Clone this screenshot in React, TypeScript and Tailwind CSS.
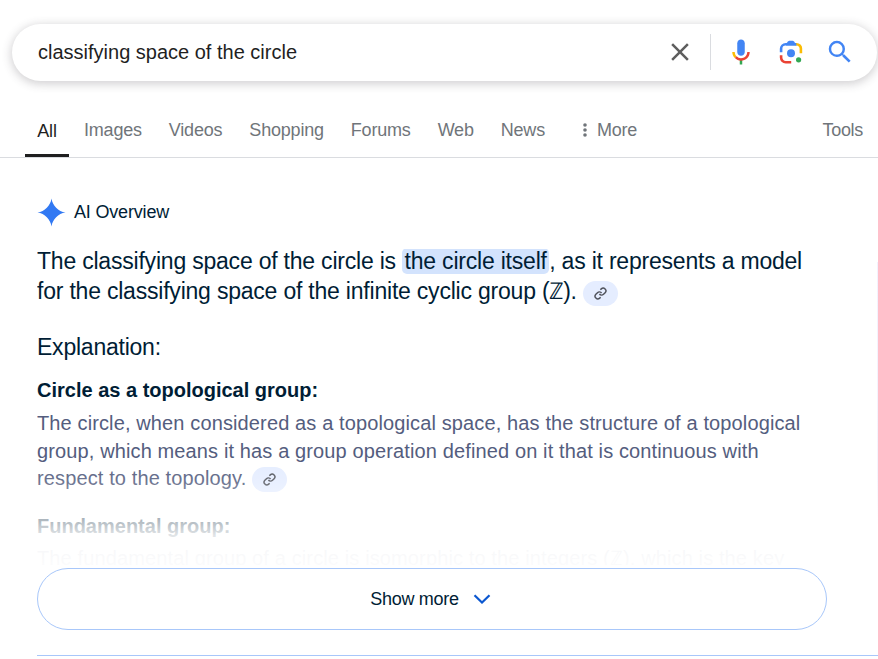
import type { ReactNode } from "react";

function LinkChip() {
  return (
    <span className="-my-3 ml-[6px] inline-flex h-[25px] w-[35px] items-center justify-center rounded-full bg-[#e5edff] align-[-1px]">
      <svg width="13" height="13" viewBox="0 0 24 24" fill="none" stroke="#50535c" strokeWidth="2.7">
        <path d="M10 13a5 5 0 0 0 7.54.54l3-3a5 5 0 0 0-7.07-7.07l-1.72 1.710" />
        <path d="M14 11a5 5 0 0 0-7.54-.54l-3 3a5 5 0 0 0 7.070 7.070l1.710-1.710" />
      </svg>
    </span>
  );
}

function Tab({ children }: { children: ReactNode }) {
  return <a className="whitespace-nowrap">{children}</a>;
}

function SearchBar() {
  return (
    <div className="mt-6 ml-3 flex h-[57px] w-[865px] items-center rounded-full bg-white pb-[2px] pl-[26px] shadow-[0_2px_10px_1px_rgba(64,60,67,0.24)]">
      <span className="grow text-[20px] leading-6 text-[#1f1f1f]">classifying space of the circle</span>
      <svg width="30" height="30" viewBox="0 0 24 24" fill="#5e5e5e" className="mr-[15px]">
        <path d="M19 6.41L17.59 5 12 10.59 6.41 5 5 6.41 10.59 12 5 17.59 6.41 19 12 13.41 17.59 19 19 17.59 13.41 12z" />
      </svg>
      <span className="mr-[15px] h-9 w-px bg-[#dadce0]" />
      <svg width="30" height="30" viewBox="0 0 24 24" className="mr-5">
        <path fill="#4285f4" d="M12 15c1.66 0 3-1.31 3-2.97V4.98C15 3.33 13.66 2 12 2S9 3.33 9 4.98v7.05C9 13.69 10.34 15 12 15z" />
        <path fill="#34a853" d="M11 18.08h2V22h-2z" />
        <path fill="#fbbc04" d="M7.05 16.87C5.78 15.6 5 13.9 5 12h2c0 1.37.56 2.6 1.46 3.48z" />
        <path fill="#ea4335" d="M12 16.93a4.97 5.25 0 0 1-3.54-1.55l-1.41 1.49c1.26 1.34 3.02 2.13 4.95 2.13 3.87 0 6.99-2.92 6.99-7h-1.99c0 2.92-2.24 4.93-5 4.93z" />
      </svg>
      <svg width="30" height="30" viewBox="0 0 30 30" fill="none" strokeWidth="2.6" className="mr-[19px]">
        <path stroke="#fbbc04" d="M19.500 7.200h1a4.400 4.400 0 0 1 4.400 4.400v4.700" />
        <path stroke="#4285f4" d="M5.100 15.300V11.800a4.600 4.600 0 0 1 4.600-4.600H20.200" />
        <path fill="#4285f4" d="M10 6.800l2-2.400q.6-.6 1.400-.6h3.200q.8 0 1.400.6L20.800 8.400H10z" />
        <path stroke="#ea4335" d="M5.100 18.300v2.300a4.600 4.600 0 0 0 4.600 4.600H15.200" />
        <circle cx="15" cy="16.200" r="4" fill="#4285f4" />
        <circle cx="22.600" cy="22.800" r="2.600" fill="#34a853" />
      </svg>
      <svg width="30" height="30" viewBox="0 0 24 24" fill="#4285f4" className="mr-[22px]">
        <path d="M15.500 14h-.79l-.28-.27A6.470 6.470 0 0 0 16 9.500 6.500 6.500 0 1 0 9.500 16c1.610 0 3.090-.59 4.230-1.570l.27.28v.79l5 4.990L20.490 19l-4.990-5zm-6 0C7.010 14 5 11.990 5 9.500S7.010 5 9.500 5 14 7.010 14 9.500 11.990 14 9.500 14z" />
      </svg>
    </div>
  );
}

export default function App() {
  return (
    <div className="h-[659px] w-[878px] overflow-hidden bg-white font-['Liberation_Sans',Arial,sans-serif] text-[#001d35]">
      <SearchBar />
      <nav className="mt-[22px] flex h-[55px] items-center border-b border-[#dadce0] pr-[15px] pl-[25px] text-[18px] tracking-[-0.2px] text-[#70757a]">
        <div className="mr-[15px] flex h-[54px] w-11 items-center justify-center border-b-[3px] border-[#1f1f1f] pt-[5px] text-[#1f1f1f]">All</div>
        <div className="flex grow gap-[27px]">
          <Tab>Images</Tab>
          <Tab>Videos</Tab>
          <Tab>Shopping</Tab>
          <Tab>Forums</Tab>
          <Tab>Web</Tab>
          <Tab>News</Tab>
          <span className="ml-[11px] flex items-center gap-[10px]">
            <svg width="4" height="14" viewBox="0 0 4 14" fill="#70757a">
              <circle cx="2" cy="2" r="1.800" />
              <circle cx="2" cy="7" r="1.800" />
              <circle cx="2" cy="12" r="1.800" />
            </svg>
            More
          </span>
        </div>
        <span className="tracking-[-0.3px]">Tools</span>
      </nav>

      <main className="pl-[37px]">
        <div className="mt-10 flex h-[29px] items-center gap-2 text-[18px] tracking-[-0.18px]">
          <svg width="29" height="29" viewBox="0 0 28 28" fill="#3279f3">
            <path d="M14 0.500C15 7.500 20.500 13 27.500 14 20.500 15 15 20.500 14 27.500 13 20.500 7.500 15 .5 14 7.500 13 13 7.500 14 0.500z" />
          </svg>
          AI Overview
        </div>
        <div className="flex justify-between">
          <div className="relative mb-[3px] h-[338px] w-[790px] overflow-hidden">
            <p className="mt-[19px] text-[23px] leading-[30px] tracking-[-0.21px] whitespace-nowrap">
              The classifying space of the circle is{" "}
              <mark className="rounded-[5px] bg-transparent bg-linear-to-b from-transparent from-[1px] to-[#d3e3fd] to-[1px] px-[2.500px] text-inherit">the circle itself</mark>, as it represents a model
              <br />
              for the classifying space of the infinite cyclic group (ℤ).
              <LinkChip />
            </p>
            <h2 className="mt-[26px] text-[23px] leading-[30px] tracking-[-0.23px]">Explanation:</h2>
            <h3 className="mt-[14px] text-[20px] leading-[28px] font-bold">Circle as a topological group:</h3>
            <p className="mt-[6px] text-[20px] leading-[27.500px] tracking-[0.125px] whitespace-nowrap text-[#545d7e]">
              The circle, when considered as a topological space, has the structure of a topological
              <br />
              group, which means it has a group operation defined on it that is continuous with
              <br />
              respect to the topology.
              <LinkChip />
            </p>
            <h3 className="mt-[19px] text-[20px] leading-[28px] font-bold">Fundamental group:</h3>
            <p className="mt-[5px] text-[20px] leading-[27.500px] tracking-[0.125px] whitespace-nowrap text-[#545d7e]">
              The fundamental group of a circle is isomorphic to the integers (ℤ), which is the key
            </p>
            <div className="absolute inset-x-0 bottom-0 h-[103px] bg-[linear-gradient(to_bottom,rgba(255,255,255,0)_0%,rgba(255,255,255,0.17)_20%,rgba(255,255,255,0.64)_53%,rgba(255,255,255,0.88)_71%,rgba(255,255,255,0.955)_85%,rgba(255,255,255,0.975)_100%)]" />
          </div>
          <div className="mt-[35px] h-[265px] w-px bg-linear-to-b from-[#f3f1fd] via-[#f5f4fd] via-80% to-white" />
        </div>
        <button className="flex h-[62px] w-[790px] items-center justify-center gap-[14px] rounded-full border border-[#a8c7fa] pr-[3px] text-[18px] tracking-[-0.3px]">
          Show more
          <svg width="18" height="10" viewBox="0 0 18 10" fill="none" stroke="#0b57d0" strokeWidth="2.200">
            <path d="M1.500 1.200L9 8.500l7.500-7.300" />
          </svg>
        </button>
        <div className="mt-[25px] border-t border-[#a8c7fa]" />
      </main>
    </div>
  );
}
